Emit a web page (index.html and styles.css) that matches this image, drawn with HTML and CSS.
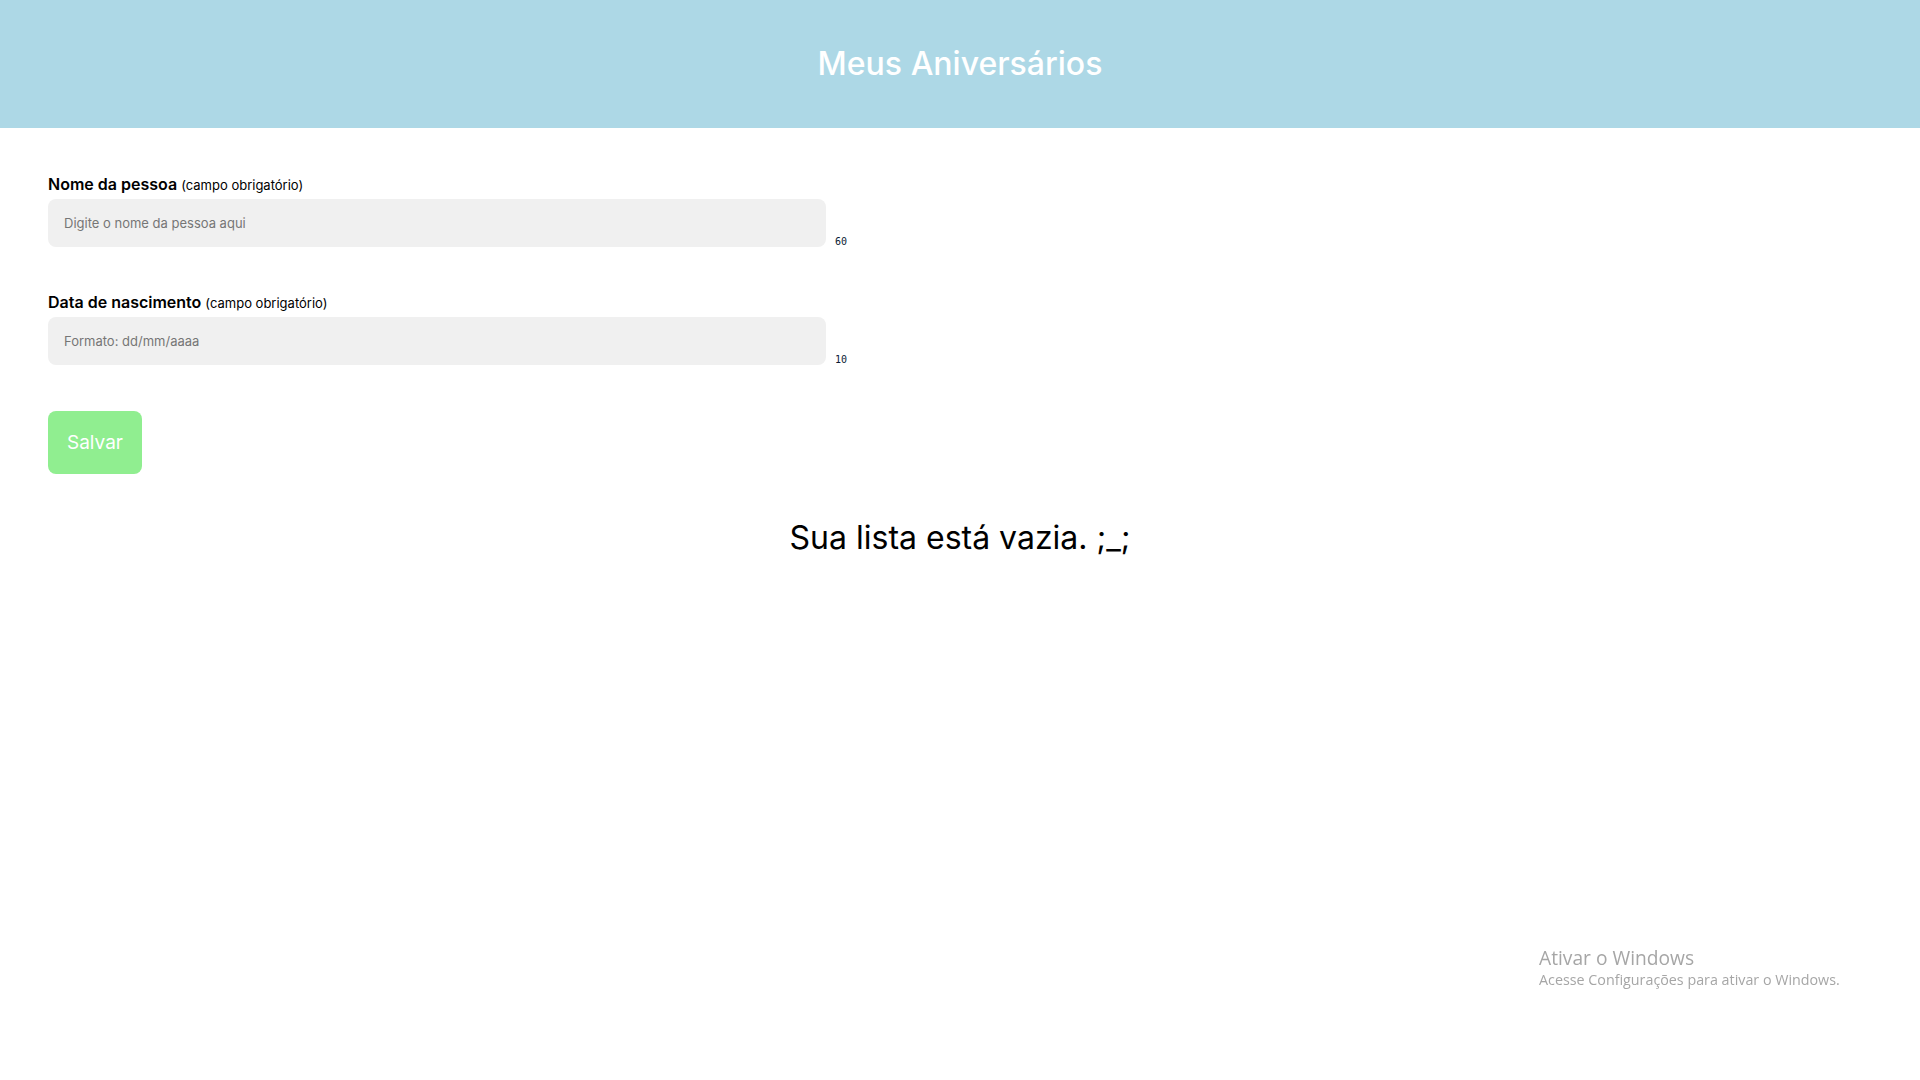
FILE: index.html
```html
<!DOCTYPE html>
<html lang="pt-BR">
<head>
<meta charset="utf-8">
<title>Meus Aniversários</title>
<link rel="stylesheet" href="styles.css">
</head>
<body>
<header class="topbar">
  <h1 class="title">Meus Aniversários</h1>
</header>
<main class="content">
  <form class="form">
    <div class="field">
      <label class="label" for="nome">Nome da pessoa <span class="hint">(campo obrigatório)</span></label>
      <div class="row">
        <input class="input" id="nome" type="text" placeholder="Digite o nome da pessoa aqui">
        <span class="counter">60</span>
      </div>
    </div>
    <div class="field">
      <label class="label" for="data">Data de nascimento <span class="hint">(campo obrigatório)</span></label>
      <div class="row">
        <input class="input" id="data" type="text" placeholder="Formato: dd/mm/aaaa">
        <span class="counter">10</span>
      </div>
    </div>
    <button class="save" type="button">Salvar</button>
  </form>
  <h2 class="empty">Sua lista está vazia. ;_;</h2>
</main>
<div class="watermark">
  <div class="wm-title">Ativar o Windows</div>
  <div class="wm-sub">Acesse Configurações para ativar o Windows.</div>
</div>
</body>
</html>
```
FILE: styles.css
```css
* { box-sizing: border-box; }
html, body { margin: 0; padding: 0; background: #fff; }
body { font-family: Inter, "Noto Sans", sans-serif; color: #000; }

.topbar {
  height: 128px;
  background: #add8e6;
  display: flex;
  align-items: center;
  justify-content: center;
}
.title {
  margin: 0;
  color: #fff;
  font-size: 32px;
  font-weight: 500;
  line-height: 1;
}

.content { padding: 47px 48px 0; }

.form { display: flex; flex-direction: column; align-items: flex-start; }

.field { display: flex; flex-direction: column; margin-bottom: 46px; }

.label {
  font-size: 16px;
  font-weight: 600;
  line-height: 18px;
  margin-bottom: 5px;
}
.hint { font-size: 13px; font-weight: 400; }

.row { display: flex; align-items: flex-end; gap: 9px; }

.input {
  width: 778px;
  height: 48px;
  border: none;
  border-radius: 8px;
  background: #f0f0f0;
  padding: 0 16px;
  font-family: Inter, sans-serif;
  font-size: 13px;
  color: #000;
  outline: none;
}
.input::placeholder { color: #767676; }

.counter {
  font-family: "DejaVu Sans Mono", monospace;
  font-size: 10px;
  line-height: 12px;
  color: #0a1a33;
  margin-bottom: -1px;
}

.save {
  margin-top: 0;
  height: 63px;
  padding: 0 19px;
  border: none;
  border-radius: 8px;
  background: #90ee90;
  color: #fff;
  font-family: Inter, sans-serif;
  font-size: 19px;
  font-weight: 400;
}

.empty {
  margin: 44px 0 0;
  text-align: center;
  font-size: 32px;
  font-weight: 400;
}

.watermark {
  position: fixed;
  left: 1539px;
  top: 945px;
  color: #a6a6a6;
  font-family: "Open Sans", "Noto Sans", sans-serif;
}
.wm-title { font-size: 19.2px; line-height: 25px; }
.wm-sub { font-size: 14.3px; line-height: 20px; }
```
